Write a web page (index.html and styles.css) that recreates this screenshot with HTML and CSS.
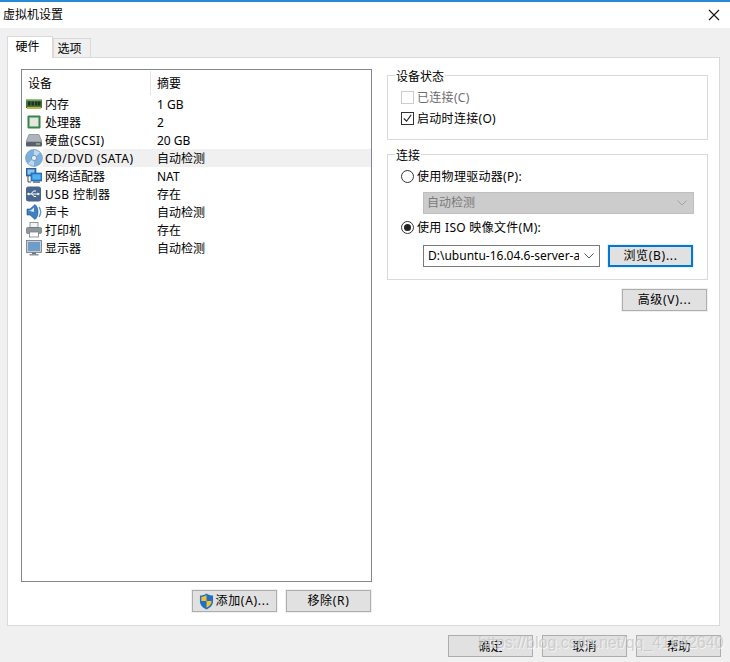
FILE: index.html
```html
<!DOCTYPE html>
<html lang="zh-CN">
<head>
<meta charset="utf-8">
<title>虚拟机设置</title>
<link rel="stylesheet" href="styles.css">
</head>
<body>
<div class="window">
  <header class="titlebar">
    <span>虚拟机设置</span>
    <svg class="close" width="12" height="12" viewBox="0 0 12 12"><path d="M1 1l10 10M11 1L1 11" stroke="#111" stroke-width="1.1" fill="none"/></svg>
  </header>
  <nav class="tabs">
    <div class="tab active">硬件</div>
    <div class="tab">选项</div>
  </nav>
  <main class="panel">
    <section class="left">
      <div class="list">
        <div class="list-head"><div class="h1">设备</div><div class="h2">摘要</div></div>
        <div class="row">
          <svg class="ico" viewBox="0 0 16 16"><rect x="0" y="3" width="16" height="9" fill="#3d7a35"/><rect x="0" y="3" width="16" height="1.5" fill="#8fc77f"/><path d="M2 5.500h2.500v4H2zM5.500 5.500H8v4H5.500zM9 5.500h2.500v4H9zM12 5.500h2.500v4H12z" fill="#2a2a2a"/><rect x="1" y="11" width="14" height="2" fill="#c9b04e"/></svg>
          <div class="name">内存</div><div class="sum">1 GB</div>
        </div>
        <div class="row">
          <svg class="ico" viewBox="0 0 16 16"><rect x="1.500" y="1.500" width="13" height="13" rx="1" fill="#2f8a45"/><rect x="3.500" y="3.500" width="9" height="9" fill="#e4e6e0" stroke="#9aa39a" stroke-width=".6"/></svg>
          <div class="name">处理器</div><div class="sum">2</div>
        </div>
        <div class="row">
          <svg class="ico" viewBox="0 0 16 16"><path d="M3 2.500h10l3 7.500H0z" fill="#aeb4bb" stroke="#6c7480" stroke-width=".6"/><rect x="0" y="10" width="16" height="4.500" rx="1" fill="#59616c"/><rect x="10" y="11.500" width="4" height="1" fill="#b7e0a0"/></svg>
          <div class="name wide">硬盘(SCSI)</div><div class="sum">20 GB</div>
        </div>
        <div class="row selected">
          <svg class="ico disc" viewBox="0 0 18 18"><circle cx="9" cy="9" r="8.500" fill="#7fb0dc" stroke="#5f8fbd" stroke-width=".6"/><path d="M9 1a8 8 0 0 1 6 2.700L9 9zM9 17a8 8 0 0 1-6-2.700L9 9z" fill="#bcd8f0"/><circle cx="9" cy="9" r="2.600" fill="#e4eff9" stroke="#5f7fa0" stroke-width=".7"/></svg>
          <div class="name wide">CD/DVD (SATA)</div><div class="sum">自动检测</div>
        </div>
        <div class="row">
          <svg class="ico" viewBox="0 0 16 16"><rect x="0" y="0" width="10" height="8" fill="#2f6fb3" stroke="#174f8e" stroke-width=".6"/><rect x="1.500" y="1.500" width="7" height="5" fill="#8ec4ee"/><path d="M2 8v6h3" fill="none" stroke="#3a4752" stroke-width="1"/><rect x="5" y="5" width="11" height="8" fill="#2f86d3" stroke="#174f8e" stroke-width=".6"/><rect x="6.500" y="6.500" width="8" height="5" fill="#4fb2f2"/><rect x="7" y="13" width="7" height="2" fill="#7f8a94"/></svg>
          <div class="name">网络适配器</div><div class="sum">NAT</div>
        </div>
        <div class="row">
          <svg class="ico" viewBox="0 0 16 16"><rect x="0" y="0.500" width="15" height="15" rx="2.500" fill="#47688c"/><path d="M2 8h10M5 8l2.500-3h2.500M6 8l2 2.500h2" fill="none" stroke="#fff" stroke-width="1"/><path d="M11.500 6.500L14 8l-2.500 1.500z" fill="#fff"/><circle cx="2.500" cy="8" r="1.200" fill="#fff"/></svg>
          <div class="name wide">USB 控制器</div><div class="sum">存在</div>
        </div>
        <div class="row">
          <svg class="ico" viewBox="0 0 16 16"><path d="M1 5h3l5-4.500c2 1.500 3 4.500 3 7.500s-1 6-3 7.500L4 11H1z" fill="#3f7fc4" stroke="#1d4f8a" stroke-width=".6"/><path d="M13 3c2 3 2 7 0 10" fill="none" stroke="#5c9ad8" stroke-width="1.400"/><path d="M2 6.500h2.500L8 3.500V8z" fill="#dbe9f7"/></svg>
          <div class="name">声卡</div><div class="sum">自动检测</div>
        </div>
        <div class="row">
          <svg class="ico" viewBox="0 0 16 16"><rect x="4" y="0.500" width="8" height="5" fill="#f4f4f4" stroke="#7b8188" stroke-width=".8"/><rect x="0.500" y="5.500" width="15" height="6" rx="1" fill="#8f959c" stroke="#5e646b" stroke-width=".6"/><rect x="13" y="7" width="1.500" height="1.500" fill="#58c24f"/><rect x="3.500" y="10" width="9" height="5" fill="#fff" stroke="#7b8188" stroke-width=".8"/></svg>
          <div class="name">打印机</div><div class="sum">存在</div>
        </div>
        <div class="row">
          <svg class="ico" viewBox="0 0 16 16"><rect x="0.500" y="0.500" width="15" height="12" fill="#c9ced4" stroke="#6d7680" stroke-width=".8"/><rect x="2" y="2" width="12" height="9" fill="#6f9dc9"/><rect x="6" y="12.500" width="4" height="1.500" fill="#6d7680"/><rect x="3.500" y="14" width="9" height="1.500" fill="#8a929b"/></svg>
          <div class="name">显示器</div><div class="sum">自动检测</div>
        </div>
      </div>
      <div class="list-actions">
        <button class="btn ls" type="button"><svg class="shield" viewBox="0 0 16 18"><path d="M8 0.500c2 1.500 4.500 2.200 7 2.200v6c0 4-3 7-7 8.800-4-1.800-7-4.800-7-8.800v-6c2.500 0 5-.7 7-2.200z" fill="#1f6fc5"/><path d="M8 2v6.500H2.500V4C4.500 4 6.500 3.200 8 2zM8 8.500h5.500c0 3.300-2.500 5.700-5.500 7.200z" fill="#f6c02c"/></svg>添加(A)...</button>
        <button class="btn ls" type="button">移除(R)</button>
      </div>
    </section>
    <section class="right">
      <fieldset class="group status">
        <legend>设备状态</legend>
        <label class="opt disabled"><span class="check"></span>已连接(C)</label>
        <label class="opt"><span class="check"><svg viewBox="0 0 12 12" width="11" height="11"><path d="M2 6l3 3 5-7" fill="none" stroke="#222" stroke-width="1.200"/></svg></span>启动时连接(O)</label>
      </fieldset>
      <fieldset class="group conn">
        <legend>连接</legend>
        <label class="opt"><span class="radio"></span>使用物理驱动器(P):</label>
        <div class="select off"><span class="sel-text">自动检测</span><svg class="chev" width="10" height="6" viewBox="0 0 10 6"><path d="M.5.500L5 5 9.500.500" fill="none" stroke="#a3a3a3"/></svg></div>
        <label class="opt iso"><span class="radio on"></span>使用 ISO 映像文件(M):</label>
        <div class="iso-row">
          <div class="select file"><span class="sel-text">D:\ubuntu-16.04.6-server-a</span><svg class="chev" width="10" height="6" viewBox="0 0 10 6"><path d="M.5.500L5 5 9.500.500" fill="none" stroke="#555"/></svg></div>
          <button class="btn focus ls" type="button">浏览(B)...</button>
        </div>
      </fieldset>
      <div class="adv"><button class="btn ls" type="button">高级(V)...</button></div>
    </section>
  </main>
  <footer class="footer">
    <button class="btn" type="button">确定</button>
    <button class="btn" type="button">取消</button>
    <button class="btn" type="button">帮助</button>
  </footer>
  <div class="watermark">https://blog.csdn.net/qq_41642640</div>
</div>
</body>
</html>
```
FILE: styles.css
```css
* { box-sizing: border-box; }
html, body { margin: 0; padding: 0; }
body {
  background: #f0f0f0;
  color: #000;
  font: 12px/16px "Noto Sans", "Noto Sans CJK SC", sans-serif;
  overflow: hidden;
}
.window { position: relative; width: 730px; height: 662px; overflow: hidden; }
.titlebar {
  height: 28px;
  background: #fff;
  border-top: 2px solid #2b8ad6;
  padding: 5px 10px 0 3px;
  display: flex;
  justify-content: space-between;
  align-items: flex-start;
}
.close { margin-top: 2px; }
.tabs { display: flex; align-items: flex-end; height: 29px; padding: 7px 0 0 7px; position: relative; z-index: 1; }
.tab {
  width: 38px;
  height: 19px;
  padding-right: 5px;
  background: #f0f0f0;
  border: 1px solid #d9d9d9;
  border-bottom: 0;
  text-align: center;
  line-height: 20px;
}
.tab.active {
  width: 46px;
  height: 22px;
  background: #fff;
  margin-bottom: -1px;
  line-height: 19px;
}
.panel {
  width: 713px;
  height: 569px;
  margin-left: 7px;
  background: #fff;
  border: 1px solid #d9d9d9;
  padding: 11px 0 0 13px;
  display: flex;
  gap: 15px;
  align-items: flex-start;
}
.left { width: 351px; }
.list { height: 513px; border: 1px solid #82878f; background: #fff; }
.list-head { display: flex; height: 25px; }
.h1 { width: 128px; padding: 6px 0 0 6px; }
.h2 { flex: 1; margin-top: 1px; border-left: 1px solid #e5e5e5; padding: 5px 0 0 6px; height: 24px; }
.row { display: flex; height: 18px; line-height: 20px; align-items: center; }
.ico { width: 16px; height: 16px; margin: 0 1px 0 4px; flex: none; }
.ico.disc { width: 18px; height: 18px; margin: 0 0 0 3px; }
.name { width: 107px; padding-left: 2px; height: 18px; }
.name.wide { letter-spacing: .45px; white-space: nowrap; }
.sum { flex: 1; padding-left: 7px; height: 18px; }
.selected .name, .selected .sum { background: #f0f0f0; }
.list-actions { display: flex; justify-content: flex-end; gap: 9px; margin: 8px 1px 0 0; }
.btn {
  width: 85px;
  height: 22px;
  padding: 0;
  background: #e1e1e1;
  border: 1px solid #adadad;
  box-shadow: 0 0 0 1px #f0f0f0;
  font: inherit;
  line-height: 18px;
  color: #000;
  display: inline-flex;
  align-items: center;
  justify-content: center;
}
.btn.ls { letter-spacing: .7px; }
.shield { width: 15px; height: 17px; margin-right: 1px; }
.btn.focus { border: 2px solid #0078d7; box-shadow: 0 0 0 1px #e5f1fb; }
.right { width: 321px; }
.group { margin: 0; padding: 0; border: 1px solid #d9d9d9; min-width: 0; }
.group legend { margin-left: 7px; padding: 0 1px; height: 12px; line-height: 16px; }
.status { height: 71px; padding-top: 6px; margin-bottom: 8px; }
.conn { height: 132px; padding-top: 6px; }
.opt { display: flex; align-items: center; height: 21px; gap: 3px; margin-left: 13px; letter-spacing: .3px; }
.opt.disabled { color: #6d6d6d; }
.check {
  width: 13px;
  height: 13px;
  border: 1px solid #333;
  background: #fff;
  display: flex;
  align-items: center;
  justify-content: center;
}
.disabled .check { border-color: #ccc; }
.radio {
  width: 13px;
  height: 13px;
  border: 1px solid #333;
  border-radius: 50%;
  background: #fff;
  position: relative;
}
.radio.on::after {
  content: "";
  position: absolute;
  left: 2px;
  top: 2px;
  width: 7px;
  height: 7px;
  border-radius: 50%;
  background: #222;
}
.select {
  height: 22px;
  display: flex;
  align-items: center;
  justify-content: space-between;
  padding: 0 5px 0 3px;
  border: 1px solid #7a7a7a;
  background: #fff;
}
.select.off { width: 271px; margin: 5px 0 0 35px; background: #ccc; border-color: #bfbfbf; color: #7a7a7a; }
.select.off .chev { margin-right: 1px; }
.opt.iso { margin-top: 3px; }
.iso-row { display: flex; gap: 8px; margin: 7px 0 0 35px; }
.select.file { width: 177px; padding-left: 4px; }
.sel-text { width: 151px; overflow: hidden; white-space: nowrap; }
.adv { display: flex; justify-content: flex-end; margin: 9px 1px 0 0; }
.footer { display: flex; gap: 9px; padding: 9px 0 0 448px; }
.footer .btn { padding-top: 1px; }
.watermark {
  position: absolute;
  left: 478px;
  top: 634px;
  font: 16px/18px "Liberation Sans", sans-serif;
  color: rgba(196, 196, 196, .75);
  text-shadow: 1px 1px 0 rgba(255, 255, 255, .6);
  white-space: nowrap;
  pointer-events: none;
}
```
